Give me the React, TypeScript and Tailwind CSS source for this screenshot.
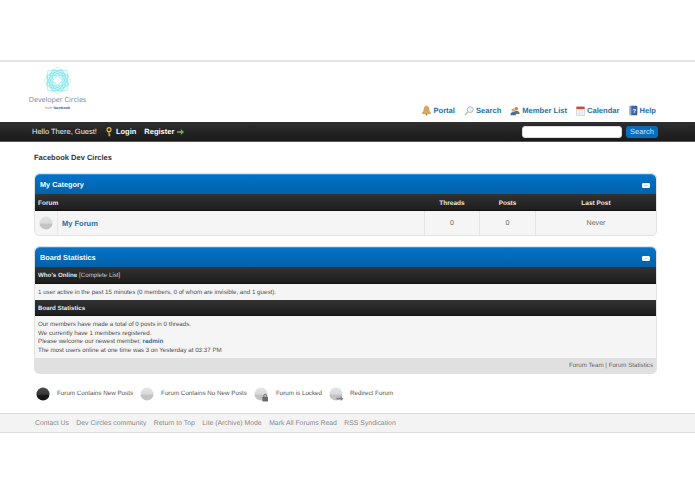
import React from "react";

const Ball = ({ dark = false, extra }: { dark?: boolean; extra?: "lock" | "arrow" }) => (
  <svg width="14" height="14" viewBox="0 0 15 15" className="shrink-0 overflow-visible">
    <defs>
      <linearGradient id={dark ? "bd" : "bl"} x1="0" y1="0" x2="0" y2="1">
        <stop offset="0" stopColor={dark ? "#4a4a4a" : "#e4e4e4"} />
        <stop offset="0.5" stopColor={dark ? "#3a3a3a" : "#dadada"} />
        <stop offset="0.6" stopColor={dark ? "#1c1c1c" : "#c2c2c2"} />
        <stop offset="1" stopColor={dark ? "#111" : "#c4c4c4"} />
      </linearGradient>
    </defs>
    <circle cx="7.5" cy="7.5" r="7" fill={`url(#${dark ? "bd" : "bl"})`} />
    {extra === "lock" && (
      <>
        <rect x="9" y="10.500" width="6" height="5" rx="0.6" fill="#6a6a6a" />
        <path d="M10.500 10.500V9.300a1.500 1.500 0 0 1 3 0v1.200" fill="none" stroke="#6a6a6a" strokeWidth="1" />
      </>
    )}
    {extra === "arrow" && <path d="M8 11.500h4.500V10l3 2.500-3 2.500v-1.500H8z" fill="#808080" />}
  </svg>
);

const Collapse = () => (
  <svg width="8" height="5" viewBox="0 0 8 5" className="shrink-0">
    <rect x="0" y="0" width="8" height="5" rx="1.200" fill="#f4f9fc" />
    <rect x="2.500" y="2" width="3" height="1" fill="#b9d6ec" />
  </svg>
);

const Logo = () => (
  <div className="flex flex-col items-center w-[57px]">
    <svg width="27" height="27" viewBox="0 0 27 27" fill="none" stroke="#7be6ec" strokeWidth="0.6">
      {[0, 45].map((a) => (
        <g key={a} transform={`rotate(${a} 13.5 13.5)`}>
          <rect x="3.800" y="3.800" width="19.400" height="19.400" />
          <rect x="6" y="6" width="15" height="15" />
          <rect x="8.200" y="8.200" width="10.600" height="10.600" />
        </g>
      ))}
      {[22.5, 67.5].map((a) => (
        <g key={a} transform={`rotate(${a} 13.5 13.5)`}>
          <rect x="5" y="5" width="17" height="17" />
          <rect x="7.200" y="7.200" width="12.600" height="12.600" />
        </g>
      ))}
      <path d="M13.500 8.500 18.500 13.500 13.500 18.500 8.500 13.500z" fill="#fff" stroke="#7be6ec" />
    </svg>
    <div className="text-[7.100px] leading-[9px] mt-[2px] text-[#7285a8] whitespace-nowrap font-['Open_Sans',sans-serif]">Developer Circles</div>
    <div className="text-[3.800px] leading-[5px] mt-[1px] text-[#8a97ad] whitespace-nowrap">from <b className="text-[#3b5998]">facebook</b></div>
  </div>
);

const Bell = () => (
  <svg width="9" height="11" viewBox="0 0 10 11"><path d="M5 .5c2 0 2.700 1.600 2.700 3.300 0 2 .9 3.200 1.800 4.200v1H.5V8c.9-1 1.800-2.200 1.800-4.200C2.300 2.100 3 .5 5 .5z" fill="#d9a860" stroke="#b08a4e" strokeWidth=".5" /><circle cx="5" cy="10" r="1" fill="#a9772e" /></svg>
);
const Lens = () => (
  <svg width="10" height="10" viewBox="0 0 11 11"><circle cx="6.800" cy="4" r="3.200" fill="#eef2f5" stroke="#aab2b7" strokeWidth="1" /><path d="M4.400 6.400 1 10" stroke="#c3b89f" strokeWidth="1.600" /></svg>
);
const People = () => (
  <svg width="10" height="10" viewBox="0 0 12 11"><circle cx="7.500" cy="2.800" r="2.200" fill="#b98a5a" /><path d="M4 9c0-3 1.500-3.800 3.500-3.800S11.500 6 11.500 9z" fill="#5d7f4c" /><circle cx="3.800" cy="4.500" r="2" fill="#d3a877" /><path d="M.5 10.500c0-2.800 1.300-3.800 3.300-3.800s3.300 1 3.300 3.800z" fill="#3f6aa5" /></svg>
);
const Cal = () => (
  <svg width="9" height="10" viewBox="0 0 10 11"><rect x=".5" y=".5" width="9" height="10" rx=".8" fill="#f3f3f3" stroke="#bbb" strokeWidth=".6" /><rect x=".5" y=".8" width="9" height="2.600" fill="#d9453c" /><path d="M2 5.200h6M2 7h6M2 8.800h6" stroke="#ddd" strokeWidth=".6" /></svg>
);
const Help = () => (
  <svg width="9" height="11" viewBox="0 0 10 11"><rect x="1" y=".5" width="8" height="10" rx=".6" fill="#3f65a8" stroke="#2c4a80" strokeWidth=".5" /><rect x="1" y=".5" width="1.600" height="10" fill="#8fa6cf" /><text x="5.800" y="7.800" fontSize="6.500" fontWeight="700" fill="#fff" fontFamily="Liberation Sans" textAnchor="middle">?</text></svg>
);
const Key = () => (
  <svg width="6" height="10" viewBox="0 0 7 11"><circle cx="3.500" cy="2.800" r="2.300" fill="none" stroke="#e8b93c" strokeWidth="1.400" /><path d="M3.500 5v5.500M3.500 8.200H5M3.500 9.800H5" stroke="#e8b93c" strokeWidth="1.200" /></svg>
);

const HeadBar = ({ children, h = "h-[17px] pt-[2px]" }: { children: React.ReactNode; h?: string }) => (
  <div className={`${h} bg-gradient-to-b from-[#333] to-[#1d1d1d] border-b border-[#111] flex items-center text-[#e6e6e6] font-bold`}>{children}</div>
);

const BlueHead = ({ title }: { title: string }) => (
  <div className="h-[20px] pt-[1px] rounded-t-[5px] bg-gradient-to-b from-[#0273c9] to-[#0361a8] flex items-center justify-between pl-[5px] pr-[6px] text-white text-[7.300px] font-bold border-t border-[#2f93dc]">
    <span>{title}</span>
    <span className="mt-[1px]"><Collapse /></span>
  </div>
);

const navItems: [React.ReactNode, string][] = [
  [<Bell />, "Portal"],
  [<Lens />, "Search"],
  [<People />, "Member List"],
  [<Cal />, "Calendar"],
  [<Help />, "Help"],
];

export default function App() {
  return (
    <div className="w-[695px] h-[494px] bg-white overflow-hidden font-['Liberation_Sans',Arial,sans-serif] text-[#333] [text-rendering:geometricPrecision]">
      <div className="h-[62px] border-b-2 border-[#e3e3e3]" />

      <div className="h-[60px] flex items-start justify-between pl-[29px] pr-[39px]">
        <div className="pt-[5px]"><Logo /></div>
        <div className="flex items-center gap-[9px] pt-[43px]">
          {navItems.map(([icon, label]) => (
            <div key={label} className="flex items-center gap-[2px] text-[#2a6fa8] text-[7.600px] font-bold leading-[11px]">
              {icon}
              <span>{label}</span>
            </div>
          ))}
        </div>
      </div>

      <div className="h-[20px] bg-gradient-to-b from-[#2f2f2f] to-[#1a1a1a] border-b border-[#555] flex items-center justify-between pl-[32px] pr-[37px] text-white text-[7.500px]">
        <div className="flex items-center">
          <span className="text-[#eee]">Hello There, Guest!</span>
          <span className="ml-[9px]"><Key /></span>
          <b className="ml-[4px]">Login</b>
          <b className="ml-[8px]">Register</b>
          <svg width="7" height="6" viewBox="0 0 7 6" className="ml-[3px]"><path d="M0 2.200h3.800V0L7 3 3.800 6V3.800H0z" fill="#6fb54a" /></svg>
        </div>
        <div className="flex items-center gap-[4px]">
          <div className="w-[100px] h-[12px] bg-white rounded-[3px] border border-[#ddd]" />
          <div className="w-[32px] h-[12px] bg-[#0a6cbd] rounded-[3px] text-[#cfe4f5] text-[7.500px] flex items-center justify-center">Search</div>
        </div>
      </div>

      <div className="px-[34px] pt-[10px]">
        <div className="text-[7.500px] font-bold leading-[11px] text-[#333]">Facebook Dev Circles</div>

        <div className="mt-[10px] w-[623px] rounded-[5px] border border-[#e2e2e2] bg-[#f5f5f5] overflow-hidden">
          <BlueHead title="My Category" />
          <HeadBar h="h-[17px] pt-[3px]">
            <span className="flex-1 pl-[3px] text-[6.500px]">Forum</span>
            <span className="w-[55px] pl-[1px] text-center text-[6.500px]">Threads</span>
            <span className="w-[56px] pl-[1px] text-center text-[6.500px]">Posts</span>
            <span className="w-[121px] pl-[1px] text-center text-[6.500px]">Last Post</span>
          </HeadBar>
          <div className="h-[24px] flex text-[7.100px] text-[#666]">
            <div className="w-[23px] flex items-center justify-center border-r border-[#e8e8e8]"><Ball /></div>
            <div className="flex-1 flex items-center pl-[4px] pt-[1px] font-bold text-[7.500px] text-[#2a6fa8]">My Forum</div>
            <div className="w-[55px] pt-[1px] flex items-center justify-center border-l border-[#e4e4e4]">0</div>
            <div className="w-[56px] pt-[1px] flex items-center justify-center border-l border-[#e4e4e4]">0</div>
            <div className="w-[121px] pt-[1px] flex items-center justify-center border-l border-[#e4e4e4]">Never</div>
          </div>
        </div>

        <div className="mt-[10px] w-[623px] rounded-[5px] border border-[#e2e2e2] bg-[#f5f5f5] overflow-hidden text-[6.200px] text-[#505050]">
          <BlueHead title="Board Statistics" />
          <HeadBar><span className="pl-[3px] text-[6.200px]">Who's Online <span className="font-normal text-[#ccc]">[Complete List]</span></span></HeadBar>
          <div className="h-[16px] pt-[1px] flex items-center px-[3px]">1 user active in the past 15 minutes (0 members, 0 of whom are invisible, and 1 guest).</div>
          <HeadBar h="h-[16px] pt-[2px]"><span className="pl-[3px] text-[6.200px]">Board Statistics</span></HeadBar>
          <div className="px-[3px] pt-[5px] leading-[8.500px] h-[42px]">
            <div>Our members have made a total of 0 posts in 0 threads.</div>
            <div>We currently have 1 members registered.</div>
            <div>Please welcome our newest member, <b className="text-[#2a6fa8]">radmin</b></div>
            <div>The most users online at one time was 3 on Yesterday at 03:37 PM</div>
          </div>
          <div className="h-[15px] bg-[#e0e0e0] flex items-center justify-end px-[3px] text-[#666]">Forum Team | Forum Statistics</div>
        </div>

        <div className="mt-[13px] ml-[2px] flex items-center text-[6.250px] text-[#555]">
          <Ball dark /><span className="ml-[7px]">Forum Contains New Posts</span>
          <span className="ml-[7px]"><Ball /></span><span className="ml-[7px]">Forum Contains No New Posts</span>
          <span className="ml-[7px]"><Ball extra="lock" /></span><span className="ml-[8px]">Forum is Locked</span>
          <span className="ml-[7px]"><Ball extra="arrow" /></span><span className="ml-[7px]">Redirect Forum</span>
        </div>
      </div>

      <div className="mt-[12px] h-[20px] pt-[3px] bg-[#f3f3f3] border-y border-[#dcdcdc] flex items-center gap-[7.500px] pl-[35px] text-[6.850px] text-[#888]">
        {["Contact Us", "Dev Circles community", "Return to Top", "Lite (Archive) Mode", "Mark All Forums Read", "RSS Syndication"].map((t) => (
          <span key={t}>{t}</span>
        ))}
      </div>
    </div>
  );
}
